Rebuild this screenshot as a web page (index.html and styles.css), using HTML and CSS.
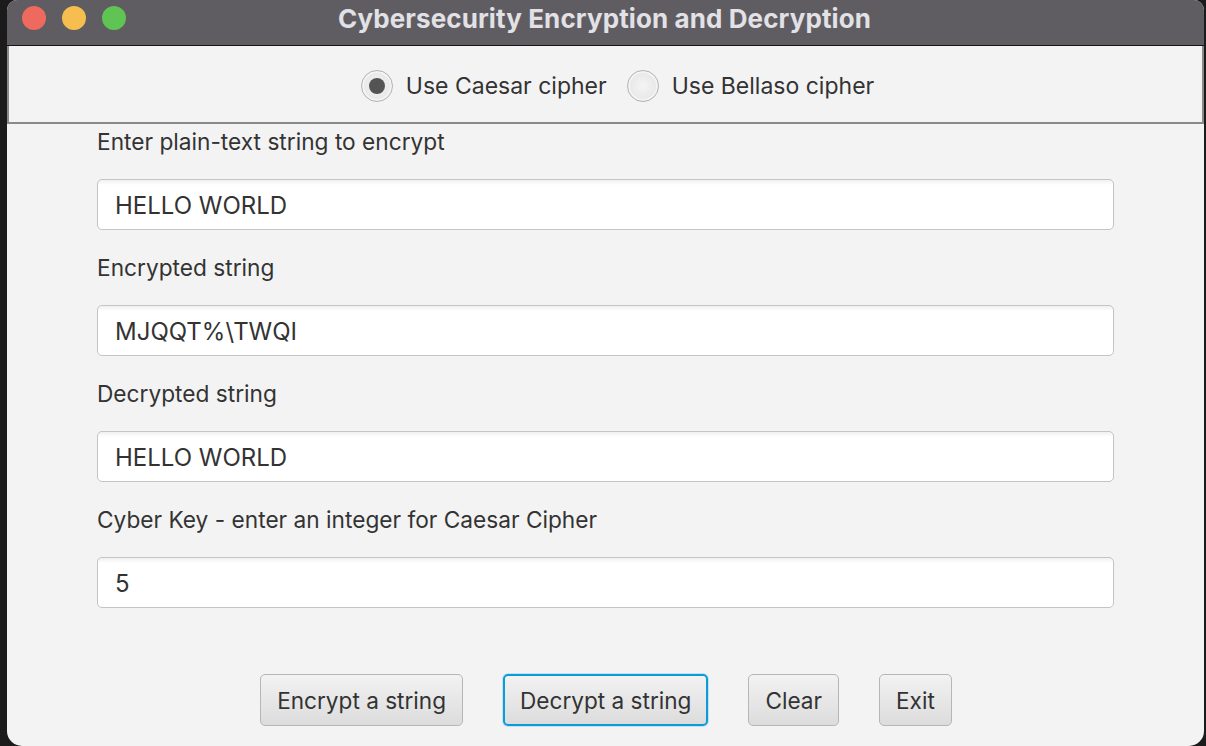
FILE: index.html
```html
<!DOCTYPE html>
<html>
<head>
<meta charset="utf-8">
<link rel="stylesheet" href="styles.css">
</head>
<body>
<div class="window">
  <div class="titlebar">
    <div class="lights">
      <span class="light red"></span>
      <span class="light yellow"></span>
      <span class="light green"></span>
    </div>
    <div class="title">Cybersecurity Encryption and Decryption</div>
  </div>
  <div class="toppanel">
    <label class="radio"><span class="radio-circle checked"><span class="dot"></span></span><span class="radio-label">Use Caesar cipher</span></label>
    <label class="radio"><span class="radio-circle"></span><span class="radio-label">Use Bellaso cipher</span></label>
  </div>
  <div class="content">
    <div class="field">
      <div class="label">Enter plain-text string to encrypt</div>
      <div class="input">HELLO WORLD</div>
    </div>
    <div class="field">
      <div class="label">Encrypted string</div>
      <div class="input">MJQQT%\TWQI</div>
    </div>
    <div class="field">
      <div class="label">Decrypted string</div>
      <div class="input">HELLO WORLD</div>
    </div>
    <div class="field">
      <div class="label">Cyber Key - enter an integer for Caesar Cipher</div>
      <div class="input">5</div>
    </div>
  </div>
  <div class="buttons">
    <button class="btn">Encrypt a string</button>
    <button class="btn focused">Decrypt a string</button>
    <button class="btn">Clear</button>
    <button class="btn">Exit</button>
  </div>
</div>
</body>
</html>
```
FILE: styles.css
```css
html, body {
  margin: 0;
  padding: 0;
  width: 1206px;
  height: 746px;
  overflow: hidden;
  background: #1b1b1c;
  font-family: Inter, "Liberation Sans", sans-serif;
}
.window {
  margin-left: 7px;
  width: 1197px;
  height: 746px;
  background: #f3f3f3;
  border-radius: 10px 10px 15px 15px;
  overflow: hidden;
  display: flex;
  flex-direction: column;
}
.titlebar {
  height: 45px;
  flex: none;
  background: #5f5d62;
  border-bottom: 1px solid #141414;
  display: flex;
  align-items: center;
  justify-content: center;
  position: relative;
}
.lights {
  position: absolute;
  left: 15px;
  top: 6px;
  display: flex;
  gap: 16px;
}
.light {
  width: 24px;
  height: 24px;
  border-radius: 50%;
  display: block;
}
.red { background: #ee6a5e; }
.yellow { background: #f5be4f; }
.green { background: #5fc453; }
.title {
  color: #e2e1e6;
  font-weight: 700;
  font-size: 26px;
  margin-top: -9px;
  margin-left: -2px;
  letter-spacing: 0.1px;
}
.toppanel {
  flex: none;
  border: 2px solid #8a8a8a;
  border-top: none;
  display: flex;
  justify-content: center;
  align-items: center;
  gap: 20px;
  box-sizing: border-box;
  height: 78px;
  padding-left: 24px;
  padding-top: 4px;
}
.radio {
  display: flex;
  align-items: center;
  gap: 13px;
}
.radio-circle {
  width: 32px;
  height: 32px;
  box-sizing: border-box;
  border-radius: 50%;
  border: 1px solid #b4b4b4;
  background: radial-gradient(circle, #f4f4f4 0%, #e8e8e8 65%, #dadada 100%);
  box-shadow: inset 0 0 0 2px #f4f4f4;
  display: flex;
  align-items: center;
  justify-content: center;
}
.dot {
  width: 16px;
  height: 16px;
  border-radius: 50%;
  background: #545454;
}
.radio-label {
  font-size: 23px;
  color: #333333;
}
.content {
  padding: 3px 0 0 90px;
  display: flex;
  flex-direction: column;
}
.field {
  display: flex;
  flex-direction: column;
  gap: 22px;
  margin-bottom: 23px;
}
.label {
  height: 30px;
  line-height: 30px;
  font-size: 22.7px;
  color: #333333;
}
.input {
  width: 1017px;
  height: 51px;
  box-sizing: border-box;
  border: 1px solid #c4c4c4;
  border-radius: 5px;
  background: linear-gradient(#f0f0f0 0px, #ffffff 5px);
  padding-left: 17px;
  font-size: 24px;
  line-height: 51px;
  color: #333333;
}
.buttons {
  margin-top: 43px;
  display: flex;
  justify-content: center;
  gap: 40px;
  padding-left: 1px;
}
.btn {
  height: 52px;
  box-sizing: border-box;
  border: 1px solid #b6b6b6;
  border-radius: 5px;
  background: linear-gradient(#f2f2f2, #dcdcdc);
  font-family: Inter, "Liberation Sans", sans-serif;
  font-size: 22.6px;
  color: #333333;
  padding: 0 16px;
}
.btn.focused {
  border: 2px solid #0d9bd8;
  box-shadow: 0 0 0 1px #bfe3f3;
  padding: 0 15px;
}
```
